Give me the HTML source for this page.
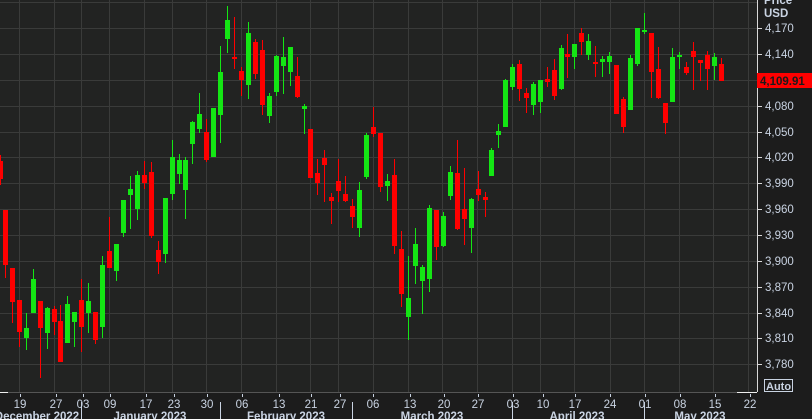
<!DOCTYPE html>
<html><head><meta charset="utf-8"><style>
html,body{margin:0;padding:0;background:#1c1c1c;width:812px;height:419px;overflow:hidden;font-family:"Liberation Sans",sans-serif}
svg{position:absolute;left:0;top:0}
</style></head><body>
<svg id="s" width="812" height="419" xmlns="http://www.w3.org/2000/svg" font-family="Liberation Sans, sans-serif">
<rect x="0" y="0" width="812" height="419" fill="#1c1c1c"/>
<rect x="0" y="0" width="757" height="392" fill="#222322"/>
<g id="grid" stroke="#3a3b3a" stroke-width="1"></g>
<g id="c"></g>
<line x1="757.5" y1="0" x2="757.5" y2="392" stroke="#d8d8d8"/>
<line x1="0" y1="392.5" x2="757" y2="392.5" stroke="#555"/>
<line x1="0" y1="392.5" x2="8" y2="392.5" stroke="#eee"/>
<line x1="737" y1="392.5" x2="757" y2="392.5" stroke="#eee"/>
<g id="ax" fill="#c9d3e2" font-size="11.5"></g>
<text x="764" y="4" fill="#c9d3e2" font-size="11.5" font-weight="bold">Price</text>
<text x="764" y="17" fill="#c9d3e2" font-size="11.5" font-weight="bold">USD</text>
<rect x="757" y="73" width="55" height="15" fill="#ff0000"/>
<text x="760" y="85" fill="#1a1a1a" font-size="11.5" font-weight="bold">4,109.91</text>
<rect x="764.5" y="379.5" width="28" height="12" fill="none" stroke="#c9d3e2"/>
<text x="766" y="390" fill="#c9d3e2" font-size="11" font-weight="bold">Auto</text>
</svg>
<script>
var NS="http://www.w3.org/2000/svg";
function el(p,t,a,txt){var e=document.createElementNS(NS,t);for(var k in a)e.setAttribute(k,a[k]);if(txt)e.textContent=txt;p.appendChild(e);return e;}
var g=document.getElementById('grid'),c=document.getElementById('c'),ax=document.getElementById('ax');
var hy=[2,28,54,80,106,132,157,183,209,235,261,287,313,338,364];
hy.forEach(function(y){el(g,'line',{x1:0,y1:y+.5,x2:757,y2:y+.5});});
var vx=[19,54,81,109,144,172,206,241,276,310,338,373,408,442,477,512,540,574,610,644,679,713,748];
vx.forEach(function(x){el(g,'line',{x1:x+.5,y1:0,x2:x+.5,y2:392});});
var pl=[[4170,28],[4140,54],[4080,106],[4050,132],[4020,157],[3990,183],[3960,209],[3930,235],[3900,261],[3870,287],[3840,313],[3810,338],[3780,364]];
pl.forEach(function(p){var s=String(p[0]);s=s[0]+','+s.slice(1);el(ax,'line',{x1:757,y1:p[1]+.5,x2:762,y2:p[1]+.5,stroke:'#d8d8d8'});el(ax,'text',{x:765,y:p[1]+4},s);});
var xl=[['19',20],['27',56],['03',83],['09',110],['17',146],['23',174],['30',207],['06',242],['13',279],['21',311],['27',340],['06',373],['13',410],['20',444],['27',478],['03',513],['10',543],['17',575],['24',610],['01',645],['08',680],['15',715],['22',750]];
xl.forEach(function(p){el(ax,'line',{x1:p[1]+.5,y1:394,x2:p[1]+.5,y2:397,stroke:'#c9d3e2'});el(ax,'text',{x:p[1],y:408,'text-anchor':'middle'},p[0]);});
[81,220,352,512,644].forEach(function(x){el(ax,'line',{x1:x+.5,y1:402,x2:x+.5,y2:419,stroke:'#c9d3e2'});});
var ml=[['December 2022',37],['January 2023',150],['February 2023',286],['March 2023',432],['April 2023',577],['May 2023',700]];
ml.forEach(function(p){el(ax,'text',{x:p[1],y:420,'text-anchor':'middle','font-weight':'bold'},p[0]);});
var d=[[0,155,185,161,179,'r'],[5,210,278,210,265,'r'],[12,268,323,268,302,'r'],[19,300,347,300,332,'r'],[26,313,350,328,338,'g'],[33,269,313,279,313,'g'],[40,301,378,301,328,'r'],[47,307,349,308,333,'g'],[54,306,335,309,322,'r'],[60,305,362,321,362,'r'],[67,296,343,304,343,'g'],[74,312,347,312,322,'g'],[81,279,352,300,327,'r'],[88,283,333,301,313,'g'],[95,312,344,312,340,'r'],[102,256,338,265,327,'g'],[109,217,268,251,268,'r'],[116,244,281,244,271,'g'],[123,200,237,200,233,'g'],[130,176,229,189,195,'g'],[137,171,220,175,209,'g'],[144,161,189,175,183,'r'],[151,162,238,172,236,'r'],[158,241,274,250,262,'r'],[165,198,263,198,254,'g'],[172,140,200,157,194,'g'],[179,154,184,160,174,'g'],[185,157,219,160,190,'g'],[192,121,164,122,144,'g'],[199,93,133,114,129,'g'],[206,119,162,132,160,'r'],[213,108,157,108,157,'g'],[220,46,143,72,115,'g'],[227,6,53,20,39,'g'],[234,17,69,57,58,'r'],[241,67,96,71,80,'r'],[248,22,99,33,85,'g'],
[255,39,79,42,74,'r'],[262,40,115,50,105,'r'],[269,93,123,96,116,'g'],[276,55,96,56,92,'g'],[283,37,94,57,66,'g'],[290,47,86,47,72,'g'],[297,57,98,76,97,'r'],[304,104,134,106,109,'g'],[310,129,178,129,178,'r'],[317,159,195,173,183,'r'],[324,150,202,158,165,'r'],[331,193,224,197,201,'r'],[338,159,202,181,191,'r'],[345,176,202,194,201,'r'],[352,199,228,206,217,'r'],[359,182,237,190,228,'g'],[366,133,179,135,177,'g'],[373,107,137,127,134,'r'],[380,133,192,133,187,'r'],[387,174,201,181,186,'g'],[394,159,254,175,246,'r'],[401,231,307,249,294,'r'],[408,256,340,298,317,'g'],[415,228,284,244,266,'g'],[422,265,314,267,281,'g'],[429,205,292,208,279,'g'],[436,210,260,210,247,'r'],[443,212,247,216,246,'g'],[450,166,200,172,196,'g'],[457,140,230,173,229,'r'],[464,168,245,209,219,'r'],[471,198,253,199,228,'g'],[478,171,201,189,195,'r'],[485,192,217,197,200,'r'],[491,148,176,150,176,'g'],[498,124,148,131,135,'g'],
[505,79,127,80,127,'g'],[512,64,90,67,87,'g'],[519,60,101,64,89,'r'],[526,88,113,93,98,'r'],[533,82,115,84,105,'g'],[540,80,113,80,102,'g'],[547,67,87,79,82,'r'],[554,59,100,70,96,'r'],[561,45,90,48,89,'g'],[567,34,78,54,57,'r'],[574,44,69,44,57,'g'],[581,28,55,33,42,'r'],[588,34,60,41,55,'g'],[595,46,77,62,64,'r'],[602,56,77,59,62,'g'],[609,52,74,56,62,'g'],[616,65,114,65,114,'r'],[623,97,133,99,127,'r'],[630,55,110,58,110,'g'],[637,28,66,28,64,'g'],[644,13,34,30,32,'g'],[651,33,98,33,72,'r'],[658,47,99,69,98,'r'],[665,103,134,103,123,'r'],[672,48,102,57,102,'g'],[679,52,69,55,57,'g'],[686,62,75,67,73,'r'],[693,42,90,51,57,'r'],[700,60,81,60,63,'r'],[707,51,90,55,69,'r'],[714,53,80,57,66,'g'],[721,58,81,64,81,'r']];
d.forEach(function(k){var col=k[5]=='g'?'#14e614':'#ff0000';
el(c,'rect',{x:k[0],y:k[1],width:1,height:Math.max(1,k[2]-k[1]),fill:col});
el(c,'rect',{x:k[0]-2,y:k[3],width:5,height:Math.max(2,k[4]-k[3]),fill:col});});
</script>
</body></html>
